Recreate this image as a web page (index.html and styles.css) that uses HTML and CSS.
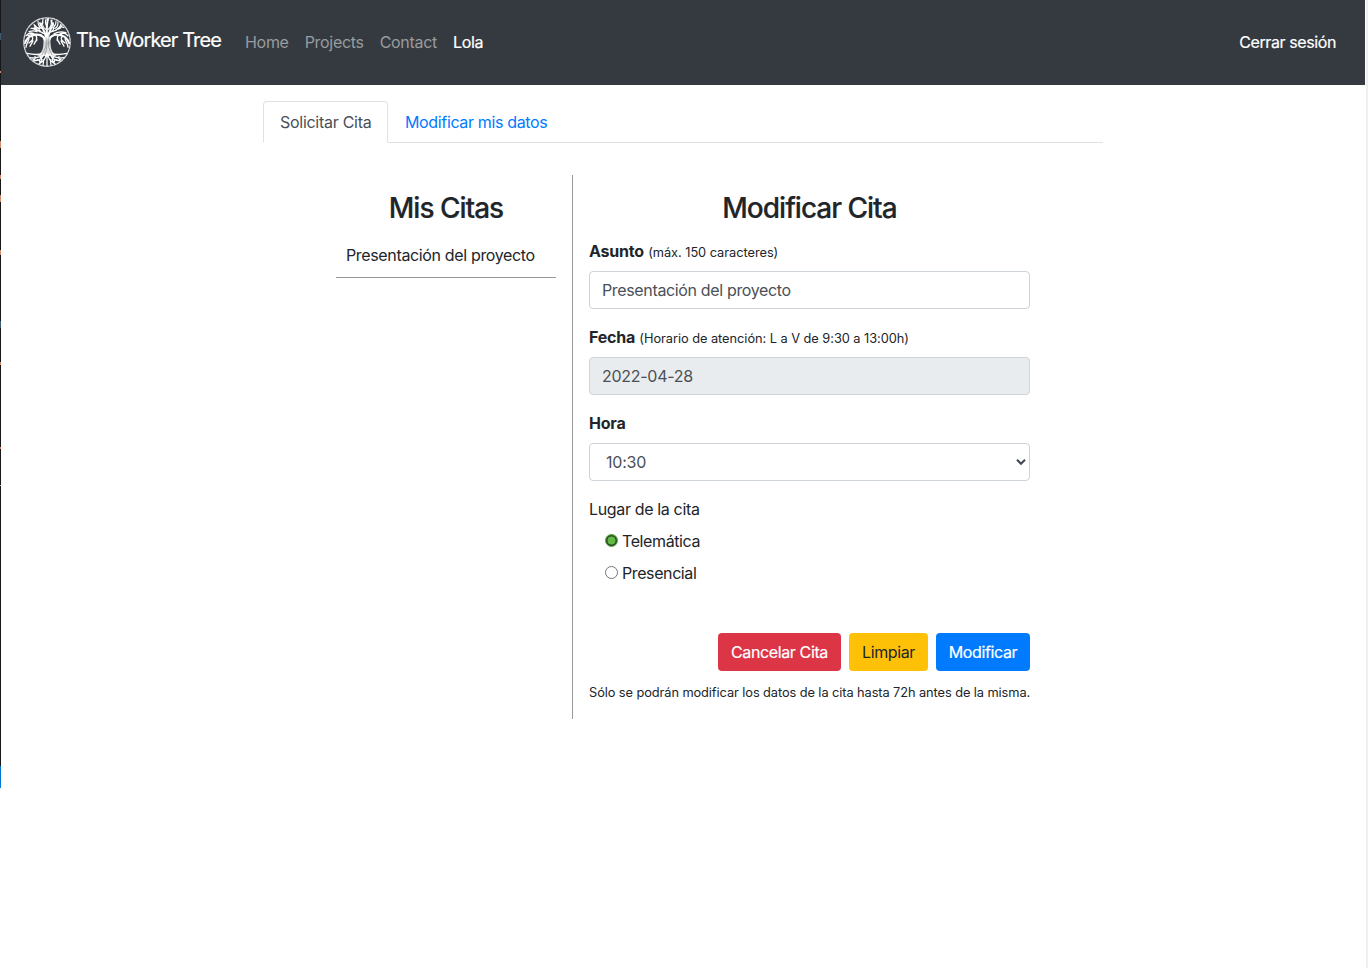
FILE: index.html
```html
<!DOCTYPE html>
<html lang="es">
<head>
<meta charset="utf-8">
<title>The Worker Tree</title>
<link rel="stylesheet" href="styles.css">
</head>
<body>
<div class="window">
  <div class="strip"></div>
  <div class="page">
    <nav class="navbar">
      <a class="brand">
        <svg class="logo" viewBox="0 0 48 48" width="48" height="50" preserveAspectRatio="none" fill="none" stroke="#fff" stroke-linecap="round">
          <circle cx="24" cy="24" r="23.2" stroke-width="1.3" stroke-dasharray="2.600 1.200" stroke="#d5d7d8"/>
          <path fill="#dcddde" stroke="none" d="M19 18c2 3 1.600 6 1.200 10-.4 4-2.200 7-6.200 9.500h20c-4-2.500-5.800-5.500-6.200-9.500-.4-4-.8-7 1.200-10l-5 2z"/>
          <path stroke-width="2" d="M22 22c-2-5-8-6-13-4-4 1-6 4-7 7M26 22c2-5 8-6 13-4 4 1 6 4 7 7M23 21c0-6-3-9-6-15M25 21c0-6 3-9 5-15M24 20c0-6-1-12 1-18"/>
          <path stroke-width="1.150" d="M20 15c-5-1-8-4-9-8M18 17c-5-1-10-1-13 1M14 14c-3-1-5-1-8 0M19 11c-3-1-4-4-4-7M17 8c2-1 3-3 3-6M23 12c-3-2-4-5-3-7M24 9c-2-2-2-4-1-7M25 12c3-2 4-5 3-9M28 11c4-1 5-4 5-7M29 14c5-1 8-4 9-7M31 16c4-2 8-2 12-1M33 13c2-3 5-4 8-3M14 11c-3-1-4 0-6 0M12 17c-3-3-6-2-9 1M36 17c3-3 6-2 9 1M31 8c-2-2-3-3-2-5M26 15c3-1 5-3 5-6M21 16c-3-1-5-4-6-6M12 8c1 2 3 3 5 3M9 11c2 0 3 2 6 2M35 5c0 3-1 5-3 6M39 8c-1 3-3 4-6 4M5 16c2-1 4 0 5 1M43 16c-2-1-4 0-5 1"/>
          <path stroke-width="1.300" d="M9 19c2 2 0 4-3 6M13 18c2 3 0 5-2 8M6 21c-1 3-3 5-3 8M10 23l-3 5M14 22l-2 2M39 19c-2 2 0 4 3 6M35 18c-2 3 0 5 2 8M42 21c1 3 3 5 3 8M38 23l3 5M34 22l2 2"/>
          <path stroke-width="1.250" d="M20 35c-6 2-11 1-16 0M28 35c6 2 11 1 16 0M20 37c-5 2-9 3-13 2M28 37c5 2 9 3 13 2M21 36c-2 4-6 6-10 6M27 36c2 4 6 6 10 6M23 36c0 4-3 7-7 9M25 36c0 4 3 7 7 9M24 35v12M17 38c2 2 2 4 0 6M31 38c-2 2-2 4 0 6M12 38c1 2 0 3-2 3M36 38c-1 2 0 3 2 3M20 41c1 2 1 3 0 5M28 41c-1 2-1 3 0 5M14 41c2 0 3 1 3 3M34 41c-2 0-3 1-3 3"/>
          <path stroke="#5a6066" stroke-width=".45" d="M23 20c1 6-1 12-4 16M25 21c0 6 1 11 4 15M24 25c0 5-1 8-2 11M26 18v8"/>
        </svg>
        <span class="brand-name">The Worker Tree</span>
      </a>
      <div class="links">
        <a>Home</a><a>Projects</a><a>Contact</a><a class="active">Lola</a>
      </div>
      <a class="logout">Cerrar sesión</a>
    </nav>
    <main class="container">
      <div class="tabs">
        <a class="tab current">Solicitar Cita</a>
        <a class="tab">Modificar mis datos</a>
      </div>
      <div class="columns">
        <section class="list">
          <h2 class="title">Mis Citas</h2>
          <div class="item">Presentación del proyecto</div>
        </section>
        <section class="form">
          <h2 class="title">Modificar Cita</h2>
          <label class="label"><b>Asunto</b> <small>(máx. 150 caracteres)</small></label>
          <div class="field">Presentación del proyecto</div>
          <label class="label"><b>Fecha</b> <small>(Horario de atención: L a V de 9:30 a 13:00h)</small></label>
          <div class="field disabled">2022-04-28</div>
          <label class="label"><b>Hora</b></label>
          <div class="field select"><span>10:30</span>
            <svg width="10" height="6" viewBox="0 0 10 6" fill="none" stroke="#3f464d" stroke-width="2"><path d="M1 .8l4 4 4-4"/></svg>
          </div>
          <div class="label">Lugar de la cita</div>
          <label class="option"><i class="radio checked"></i><span>Telemática</span></label>
          <label class="option"><i class="radio"></i><span>Presencial</span></label>
          <div class="buttons">
            <button class="btn danger">Cancelar Cita</button>
            <button class="btn warning">Limpiar</button>
            <button class="btn primary">Modificar</button>
          </div>
          <small class="note">Sólo se podrán modificar los datos de la cita hasta 72h antes de la misma.</small>
        </section>
      </div>
    </main>
  </div>
  <div class="edge"></div>
</div>
</body>
</html>
```
FILE: styles.css
```css
* { box-sizing: border-box; }
body { margin: 0; background: #fff; color: #212529; font: 16px/24px Inter, "Liberation Sans", sans-serif; letter-spacing: -0.35px; }
.window { display: flex; height: 968px; overflow: hidden; }
.strip { width: 1px; height: 788px; background:
  linear-gradient(#ce8a6c, #ce8a6c) 0 71px/1px 2px no-repeat,
  linear-gradient(#ce8a6c, #ce8a6c) 0 141px/1px 7px no-repeat,
  linear-gradient(#ce8a6c, #ce8a6c) 0 175px/1px 4px no-repeat,
  linear-gradient(#ce8a6c, #ce8a6c) 0 195px/1px 7px no-repeat,
  linear-gradient(#ce8a6c, #ce8a6c) 0 250px/1px 5px no-repeat,
  linear-gradient(#ce8a6c, #ce8a6c) 0 362px/1px 3px no-repeat,
  linear-gradient(#3e5c70, #3e5c70) 0 33px/1px 7px no-repeat,
  linear-gradient(#3e5c70, #3e5c70) 0 321px/1px 7px no-repeat,
  linear-gradient(#ce8a6c, #ce8a6c) 0 447px/1px 2px no-repeat,
  linear-gradient(#bbb, #bbb) 0 485px/1px 1px no-repeat,
  linear-gradient(#0078d4, #0078d4) 0 766px/1px 22px no-repeat, #181818; }
.page { width: 1364px; }
.edge { flex: 1; border-left: 1px solid #fff; background: #f0f0f0; }
.navbar { display: flex; align-items: flex-start; height: 85px; padding: 17px 29px 0 22px; background: #343a40; }
.brand { display: flex; color: #fff; gap: 5px; }
.brand-name { width: 146px; padding-top: 8px; font-size: 20px; line-height: 30px; white-space: nowrap; letter-spacing: -0.88px; -webkit-text-stroke: 0.2px; }
.links { display: flex; gap: 16px; padding-top: 13px; margin-left: 23px; color: #999c9f; letter-spacing: -0.3px; }
.links .active { color: #fff; -webkit-text-stroke: 0.2px; }
.logout { margin-left: auto; padding-top: 13px; color: #fff; letter-spacing: -0.4px; -webkit-text-stroke: 0.2px; }
.container { width: 840px; margin: 16px 0 0 262px; }
.tabs { display: flex; height: 42px; border-bottom: 1px solid #dee2e6; }
.tab { height: 42px; padding: 9px 17px; color: #007bff; white-space: nowrap; }
.tab.current { width: 125px; padding: 8px 16px; border: 1px solid #dee2e6; border-bottom-color: #fff; border-radius: 4px 4px 0 0; background: #fff; color: #495057; letter-spacing: -0.28px; }
.columns { display: flex; justify-content: center; margin-top: 32px; height: 544px; }
.list { width: 253px; padding: 16px 16px 0; border-right: 1px solid #999; }
.form { width: 473px; padding: 16px 16px 0; }
.title { margin: 0 0 13px; font-size: 28px; line-height: 35px; font-weight: 500; text-align: center; letter-spacing: -1px; -webkit-text-stroke: 0.2px; }
.item { height: 39px; padding: 4px 10px 0; border-bottom: 1px solid #999; white-space: nowrap; }
.label { display: block; height: 24px; margin-bottom: 8px; white-space: nowrap; }
.label b { font-weight: 700; letter-spacing: -0.2px; }
small { font-size: 12.8px; letter-spacing: -0.04px; }
.field { height: 38px; margin-bottom: 16px; padding: 6px 12px; border: 1px solid #ced4da; border-radius: 4px; color: #495057; }
.disabled { background: #e9ecef; letter-spacing: -0.28px; }
.select { display: flex; align-items: center; justify-content: space-between; padding: 0 3px 0 16px; letter-spacing: -0.2px; }
.option { display: flex; align-items: center; height: 24px; margin: 0 0 8px 16px; gap: 4px; letter-spacing: -0.4px; }
.radio { width: 13px; height: 13px; margin-top: -2px; border: 1px solid #767676; border-radius: 50%; }
.radio.checked { border: 1px solid #4c9a39; background: #62ba46; box-shadow: inset 0 0 0 1.5px #30452b; }
.buttons { display: flex; justify-content: flex-end; gap: 8px; margin-top: 48px; }
.btn { height: 38px; padding: 0; border: 0; border-radius: 4px; font: inherit; letter-spacing: -0.38px; color: #fff; white-space: nowrap; }
.danger { width: 123px; background: #dc3545; }
.warning { width: 79px; background: #ffc107; color: #212529; }
.primary { width: 94px; background: #007bff; }
.danger, .primary { -webkit-text-stroke: 0.2px; }
.note { display: block; margin-top: 10px; white-space: nowrap; letter-spacing: -0.08px; }
```
